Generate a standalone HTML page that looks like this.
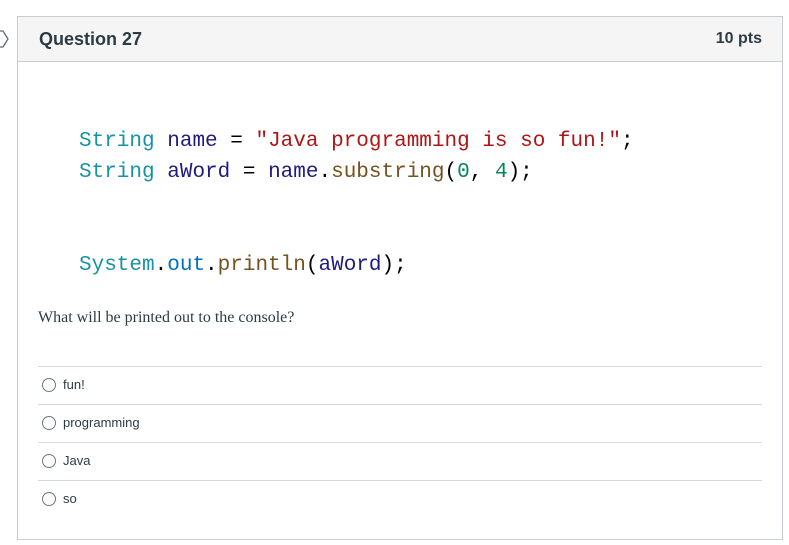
<!DOCTYPE html>
<html><head><style>
body{margin:0;background:#fff;width:789px;height:545px;position:relative;overflow:hidden;font-family:"Liberation Sans",sans-serif}
.card{position:absolute;left:17px;top:16px;width:764px;height:522px;border:1px solid #c7cdd1}
.hd{position:absolute;left:0;top:0;right:0;height:44px;background:#f5f5f5;border-bottom:1px solid #c7cdd1}
.hd .t{position:absolute;left:21px;top:12px;font-weight:bold;font-size:18px;color:#2d3b45}
.hd .p{position:absolute;right:20px;top:13px;font-weight:bold;font-size:16px;color:#2d3b45}
.code{position:absolute;left:79px;font-family:"Liberation Mono",monospace;font-size:21px;white-space:pre;color:#000}
.k{color:#1592a4}.v{color:#1f1c7e}.s{color:#b01515}.m{color:#74531f}.n{color:#098658}.o{color:#0070c1}
.q{position:absolute;left:38px;top:309px;font-family:"Liberation Serif",serif;font-size:16px;color:#2d3b45}
.line{position:absolute;left:38px;width:724px;border-top:1px solid #d6d9dc}
.opt{position:absolute;left:42px;font-size:13px;color:#2d3b45}
.opt i{display:inline-block;width:12px;height:12px;border:1px solid #6b7780;border-radius:50%;vertical-align:-3px;margin-right:7px}
.arr{position:absolute;left:-6px;top:30px}
</style></head><body>
<svg class="arr" width="16" height="18" viewBox="0 0 16 18"><path d="M2 1 L9 1 L14 9 L9 17 L2 17" fill="none" stroke="#5b6a75" stroke-width="1.3"/></svg>
<div class="card"><div class="hd"><span class="t">Question 27</span><span class="p">10 pts</span></div></div>
<div class="code" style="top:130px"><span class="k">String</span> <span class="v">name</span> = <span class="s">"Java programming is so fun!"</span>;</div>
<div class="code" style="top:161px"><span class="k">String</span> <span class="v">aWord</span> = <span class="v">name</span>.<span class="m">substring</span>(<span class="n">0</span>, <span class="n">4</span>);</div>
<div class="code" style="top:254px"><span class="k">System</span>.<span class="o">out</span>.<span class="m">println</span>(<span class="v">aWord</span>);</div>
<div class="q">What will be printed out to the console?</div>
<div class="line" style="top:366px"></div>
<div class="opt" style="top:377px"><i></i>fun!</div>
<div class="line" style="top:404px"></div>
<div class="opt" style="top:415px"><i></i>programming</div>
<div class="line" style="top:442px"></div>
<div class="opt" style="top:453px"><i></i>Java</div>
<div class="line" style="top:480px"></div>
<div class="opt" style="top:491px"><i></i>so</div>
</body></html>
